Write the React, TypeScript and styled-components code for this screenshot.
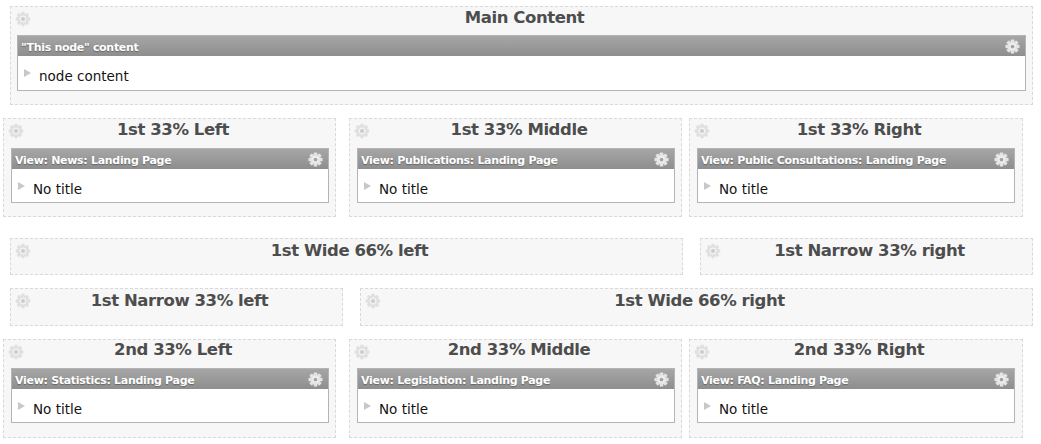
import React from 'react'
import styled, { createGlobalStyle } from 'styled-components'

const GlobalStyle = createGlobalStyle`
  html, body {
    margin: 0;
    padding: 0;
    background: #fff;
    font-family: "DejaVu Sans", Verdana, sans-serif;
  }
`

const Page = styled.div`
  width: 1041px;
  height: 444px;
  overflow: hidden;
  padding-top: 6px;
  box-sizing: border-box;
`

const Row = styled.div<{ $left: number; $gap: number; $top: number }>`
  display: flex;
  margin-left: ${p => p.$left}px;
  margin-top: ${p => p.$top}px;
  gap: ${p => p.$gap}px;
`

const Pane = styled.div<{ $width: number; $height: number; $inset: number; $padLeft: number; $padRight: number }>`
  position: relative;
  box-sizing: border-box;
  flex: none;
  width: ${p => p.$width}px;
  height: ${p => p.$height}px;
  margin-right: ${p => p.$inset}px;
  padding: 0 ${p => p.$padRight}px 0 ${p => p.$padLeft}px;
  background: #f7f7f7;
  border: 1px dashed #d9d9d9;
`

const PaneTitle = styled.h2<{ $top: number; $height: number }>`
  margin: ${p => p.$top}px 0 0;
  height: ${p => p.$height}px;
  padding-left: 6px;
  font-size: 16.5px;
  line-height: 22px;
  font-weight: bold;
  letter-spacing: -0.42px;
  text-align: center;
  color: #4d4d4d;
`

const PaneGear = styled.span`
  position: absolute;
  left: 4px;
  top: 4px;
  display: flex;
  color: #e0e0e0;
`

const Block = styled.div`
  box-sizing: border-box;
  border: 1px solid #b4b4b4;
  background: #fff;
`

const BlockHeader = styled.div`
  display: flex;
  align-items: center;
  justify-content: space-between;
  height: 20px;
  padding: 0 5px 0 3px;
  background: linear-gradient(#a6a6a6, #8e8e8e);
`

const BlockTitle = styled.span`
  padding-top: 2px;
  font-size: 11px;
  font-weight: bold;
  letter-spacing: -0.3px;
  color: #fff;
  text-shadow: 0 1px 1px #666;
`

const BlockGear = styled.span`
  display: flex;
  color: #e4e4e4;
`

const BlockBody = styled.div<{ $height: number }>`
  display: flex;
  align-items: flex-start;
  height: ${p => p.$height}px;
  padding: 12px 0 0 6px;
  box-sizing: border-box;
`

const Arrow = styled.span`
  flex: none;
  width: 0;
  height: 0;
  margin: 1px 8px 0 0;
  border-left: 7px solid #c8c8c8;
  border-top: 4px solid transparent;
  border-bottom: 4px solid transparent;
`

const BodyText = styled.span`
  font-size: 13.5px;
  line-height: 16px;
  color: #141414;
`

function Gear({ size, hub, toothRadius }: { size: number; hub: string; toothRadius: number }) {
  const teeth = [0, 45, 90, 135, 180, 225, 270, 315]
  return (
    <svg width={size} height={size} viewBox="0 0 16 16" fill="currentColor">
      {teeth.map(angle => (
        <rect key={angle} x="6.1" y="0.5" width="3.8" height="4.5" rx={toothRadius} transform={`rotate(${angle} 8 8)`} />
      ))}
      <circle cx="8" cy="8" r="5.4" />
      <circle cx="8" cy="8" r="3.4" fill="#f2f2f2" />
      <circle cx="8" cy="8" r="2" fill={hub} />
    </svg>
  )
}

type PaneProps = {
  title: string
  width: number
  height: number
  inset?: number
  padLeft?: number
  padRight?: number
  titleTop?: number
  titleHeight?: number
  blockTitle?: string
  bodyHeight?: number
  body?: string
}

function PanelPane({
  title,
  width,
  height,
  inset = 0,
  padLeft = 6,
  padRight = 6,
  titleTop = 0,
  titleHeight = 28,
  blockTitle,
  bodyHeight = 33,
  body,
}: PaneProps) {
  return (
    <Pane $width={width} $height={height} $inset={inset} $padLeft={padLeft} $padRight={padRight}>
      <PaneGear><Gear size={16} hub="#cdcdcd" toothRadius={1.9} /></PaneGear>
      <PaneTitle $top={titleTop} $height={titleHeight}>{title}</PaneTitle>
      {blockTitle && (
        <Block>
          <BlockHeader>
            <BlockTitle>{blockTitle}</BlockTitle>
            <BlockGear><Gear size={15} hub="#a4a4a4" toothRadius={0.7} /></BlockGear>
          </BlockHeader>
          <BlockBody $height={bodyHeight}>
            <Arrow />
            <BodyText>{body}</BodyText>
          </BlockBody>
        </Block>
      )}
    </Pane>
  )
}

export default function App() {
  return (
    <Page>
      <GlobalStyle />
      <Row $left={10} $gap={0} $top={0}>
        <PanelPane title="Main Content" width={1023} height={99} bodyHeight={34} blockTitle={'"This node" content'} body="node content" />
      </Row>
      <Row $left={3} $gap={13} $top={13}>
        <PanelPane title="1st 33% Left" width={333} height={99} padLeft={7} titleHeight={29} blockTitle="View: News: Landing Page" body="No title" />
        <PanelPane title="1st 33% Middle" width={333} height={99} inset={-6} padLeft={7} titleHeight={29} blockTitle="View: Publications: Landing Page" body="No title" />
        <PanelPane title="1st 33% Right" width={334} height={99} padLeft={7} padRight={7} titleHeight={29} blockTitle="View: Public Consultations: Landing Page" body="No title" />
      </Row>
      <Row $left={10} $gap={17} $top={21}>
        <PanelPane title="1st Wide 66% left" width={673} height={37} titleTop={1} />
        <PanelPane title="1st Narrow 33% right" width={333} height={37} titleTop={1} />
      </Row>
      <Row $left={10} $gap={17} $top={13}>
        <PanelPane title="1st Narrow 33% left" width={333} height={38} titleTop={1} />
        <PanelPane title="1st Wide 66% right" width={673} height={38} titleTop={1} />
      </Row>
      <Row $left={3} $gap={13} $top={13}>
        <PanelPane title="2nd 33% Left" width={333} height={99} padLeft={7} titleTop={-1} titleHeight={29} blockTitle="View: Statistics: Landing Page" body="No title" />
        <PanelPane title="2nd 33% Middle" width={333} height={99} inset={-6} padLeft={7} titleTop={-1} titleHeight={29} blockTitle="View: Legislation: Landing Page" body="No title" />
        <PanelPane title="2nd 33% Right" width={334} height={99} padLeft={7} padRight={7} titleTop={-1} titleHeight={29} blockTitle="View: FAQ: Landing Page" body="No title" />
      </Row>
    </Page>
  )
}
